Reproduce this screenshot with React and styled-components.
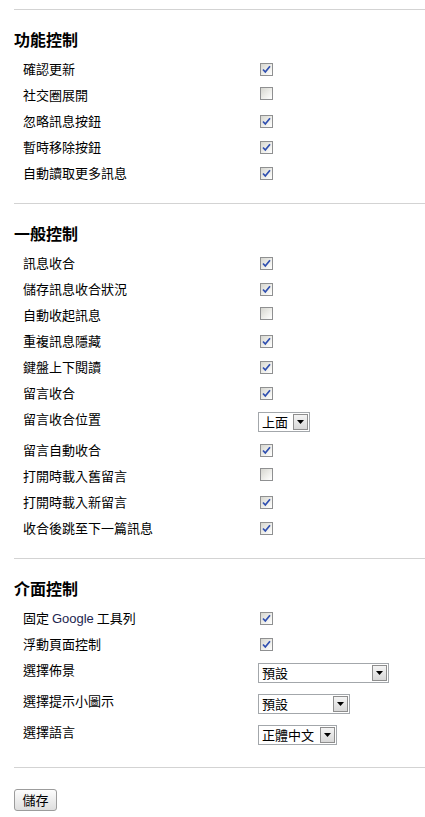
import React from "react";
import styled, { createGlobalStyle } from "styled-components";

const Global = createGlobalStyle`
  html, body { margin: 0; padding: 0; background: #fff; }
  body {
    font-family: "Liberation Sans", "Noto Sans CJK TC", sans-serif;
    color: #000;
  }
`;

const Page = styled.div`
  padding: 9px 0 6px 14px;
  width: 425px;
  box-sizing: border-box;
`;

const Rule = styled.div`
  height: 1px;
  background: #d3d3d3;
`;

const Section = styled.section`
  padding-bottom: 17px;
`;

const Heading = styled.h2`
  margin: 19px 0 7px;
  font-family: "Noto Sans CJK TC", sans-serif;
  font-size: 16px;
  font-weight: 700;
  line-height: 20px;
  height: 20px;
`;

const Row = styled.div`
  display: grid;
  grid-template-columns: 235px 1fr;
  align-items: center;
  padding-left: 9px;
  height: ${(p) => (p.$tall ? 31 : 26)}px;
`;

const Label = styled.span`
  font-family: "Noto Sans CJK TC", sans-serif;
  font-size: 13px;
  line-height: 16px;
  align-self: ${(p) => (p.$top ? "start" : "center")};
  margin-top: ${(p) => (p.$top ? 5 : 0)}px;
`;

const Latin = styled.span`
  font-family: "Liberation Sans", Arial, sans-serif;
  color: #1d2650;
`;

const Box = styled.span`
  display: inline-flex;
  align-items: center;
  justify-content: center;
  width: 13px;
  height: 13px;
  box-sizing: border-box;
  margin-left: 2px;
  border: 1px solid #8f9091;
  background: linear-gradient(135deg, #d6d6d0 0%, #eeeeea 55%, #ffffff 100%);
`;

const Check = ({ checked }) => (
  <Box role="checkbox" aria-checked={checked}>
    {checked && (
      <svg width="9" height="9" viewBox="0 0 9 9">
        <path d="M1 4.5 L3.3 7 L8 1.2" fill="none" stroke="#2f4fb0" strokeWidth="1.7" />
      </svg>
    )}
  </Box>
);

const SelectBox = styled.span`
  display: inline-flex;
  align-items: stretch;
  width: ${(p) => p.$w}px;
  height: 20px;
  box-sizing: border-box;
  border: 1px solid #a3a7ab;
  background: #fff;
`;

const SelectText = styled.span`
  flex: 1;
  font-family: "Noto Sans CJK TC", sans-serif;
  font-size: 13px;
  line-height: 18px;
  padding-left: 3px;
  overflow: hidden;
  white-space: nowrap;
`;

const Arrow = styled.span`
  width: 15px;
  margin: 1px;
  box-sizing: border-box;
  border: 1px solid #8e8e8e;
  background: linear-gradient(#f4f4f4, #d8d8d8);
  display: flex;
  align-items: center;
  justify-content: center;
`;

const Select = ({ w, value }) => (
  <SelectBox $w={w}>
    <SelectText>{value}</SelectText>
    <Arrow>
      <svg width="7" height="4" viewBox="0 0 7 4">
        <path d="M0 0 H7 L3.5 4 Z" fill="#000" />
      </svg>
    </Arrow>
  </SelectBox>
);

const Footer = styled.div`
  padding-top: 21px;
`;

const Button = styled.button`
  width: 43px;
  height: 22px;
  padding: 0;
  border: 1px solid #9c9c9c;
  border-radius: 3px;
  background: linear-gradient(#fdfdfd, #dedede);
  font-family: "Noto Sans CJK TC", sans-serif;
  font-size: 13px;
  line-height: 18px;
  color: #000;
`;

const sections = [
  {
    title: "功能控制",
    rows: [
      ["確認更新", true],
      ["社交圈展開", false],
      ["忽略訊息按鈕", true],
      ["暫時移除按鈕", true],
      ["自動讀取更多訊息", true],
    ],
  },
  {
    title: "一般控制",
    rows: [
      ["訊息收合", true],
      ["儲存訊息收合狀況", true],
      ["自動收起訊息", false],
      ["重複訊息隱藏", true],
      ["鍵盤上下閱讀", true],
      ["留言收合", true],
      ["留言收合位置", { w: 52, value: "上面" }],
      ["留言自動收合", true],
      ["打開時載入舊留言", false],
      ["打開時載入新留言", true],
      ["收合後跳至下一篇訊息", true],
    ],
  },
  {
    title: "介面控制",
    rows: [
      [
        <>
          固定 <Latin>Google</Latin> 工具列
        </>,
        true,
      ],
      ["浮動頁面控制", true],
      ["選擇佈景", { w: 131, value: "預設" }],
      ["選擇提示小圖示", { w: 92, value: "預設" }],
      ["選擇語言", { w: 79, value: "正體中文" }],
    ],
  },
];

export default function App() {
  return (
    <Page>
      <Global />
      {sections.map((s) => (
        <React.Fragment key={s.title}>
          <Rule />
          <Section>
            <Heading>{s.title}</Heading>
            {s.rows.map(([label, ctl], i) => {
              const isSel = typeof ctl === "object" && !React.isValidElement(ctl);
              return (
                <Row key={i} $tall={isSel}>
                  <Label $top={isSel}>{label}</Label>
                  <span>
                    {isSel ? <Select w={ctl.w} value={ctl.value} /> : <Check checked={ctl} />}
                  </span>
                </Row>
              );
            })}
          </Section>
        </React.Fragment>
      ))}
      <Rule />
      <Footer>
        <Button>儲存</Button>
      </Footer>
    </Page>
  );
}
